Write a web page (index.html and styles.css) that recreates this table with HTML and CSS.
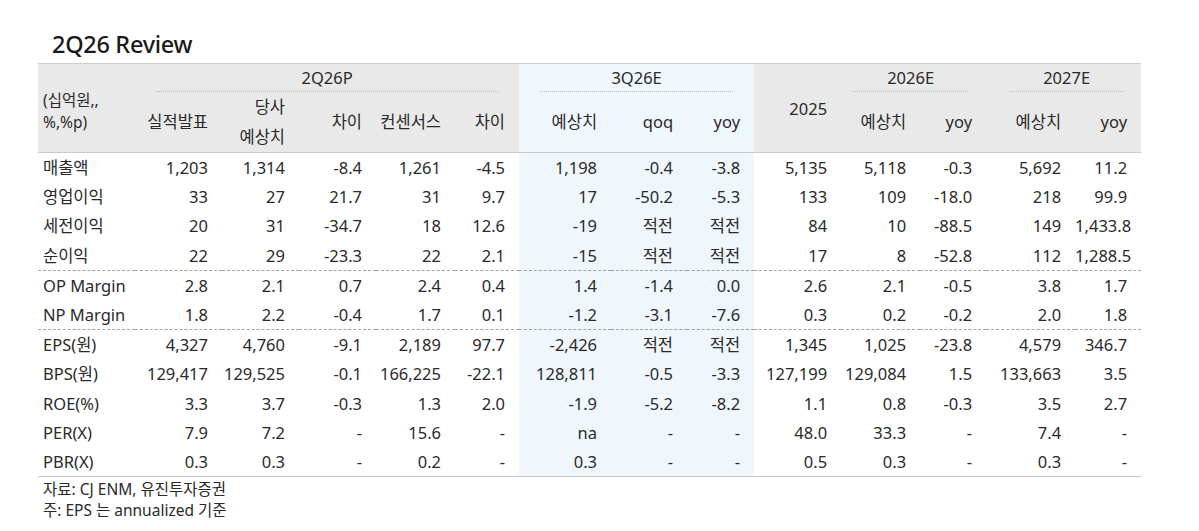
FILE: index.html
```html
<!DOCTYPE html>
<html lang="ko">
<head>
<meta charset="utf-8">
<title>2Q26 Review</title>
<link rel="stylesheet" href="styles.css">
</head>
<body>
<div class="page">
  <h1 class="title">2Q26 Review</h1>
  <table class="tbl">
    <colgroup>
      <col style="width:97px"><col style="width:87px"><col style="width:77px"><col style="width:77px"><col style="width:79px"><col style="width:64px">
      <col style="width:92px"><col style="width:76px"><col style="width:67px">
      <col style="width:87px"><col style="width:79px"><col style="width:66px"><col style="width:89px"><col style="width:66px">
    </colgroup>
    <thead>
      <tr class="hA">
        <th class="unit" rowspan="2">(십억원,,<br>%,%p)</th>
        <th class="grp g1" colspan="5"><div>2Q26P</div></th>
        <th class="grp g2 b" colspan="3"><div>3Q26E</div></th>
        <th class="yr" rowspan="2">2025</th>
        <th class="grp g3" colspan="2"><div>2026E</div></th>
        <th class="grp g4" colspan="2"><div>2027E</div></th>
      </tr>
      <tr class="hB">
        <th>실적발표</th>
        <th class="two">당사<br>예상치</th>
        <th>차이</th>
        <th>컨센서스</th>
        <th>차이</th>
        <th class="b">예상치</th>
        <th class="b">qoq</th>
        <th class="b">yoy</th>
        <th>예상치</th>
        <th>yoy</th>
        <th>예상치</th>
        <th>yoy</th>
      </tr>
    </thead>
    <tbody>
      <tr><td>매출액</td><td>1,203</td><td>1,314</td><td>-8.4</td><td>1,261</td><td>-4.5</td><td>1,198</td><td>-0.4</td><td>-3.8</td><td>5,135</td><td>5,118</td><td>-0.3</td><td>5,692</td><td>11.2</td></tr>
      <tr><td>영업이익</td><td>33</td><td>27</td><td>21.7</td><td>31</td><td>9.7</td><td>17</td><td>-50.2</td><td>-5.3</td><td>133</td><td>109</td><td>-18.0</td><td>218</td><td>99.9</td></tr>
      <tr><td>세전이익</td><td>20</td><td>31</td><td>-34.7</td><td>18</td><td>12.6</td><td>-19</td><td>적전</td><td>적전</td><td>84</td><td>10</td><td>-88.5</td><td>149</td><td>1,433.8</td></tr>
      <tr><td>순이익</td><td>22</td><td>29</td><td>-23.3</td><td>22</td><td>2.1</td><td>-15</td><td>적전</td><td>적전</td><td>17</td><td>8</td><td>-52.8</td><td>112</td><td>1,288.5</td></tr>
      <tr class="sep"><td>OP Margin</td><td>2.8</td><td>2.1</td><td>0.7</td><td>2.4</td><td>0.4</td><td>1.4</td><td>-1.4</td><td>0.0</td><td>2.6</td><td>2.1</td><td>-0.5</td><td>3.8</td><td>1.7</td></tr>
      <tr><td>NP Margin</td><td>1.8</td><td>2.2</td><td>-0.4</td><td>1.7</td><td>0.1</td><td>-1.2</td><td>-3.1</td><td>-7.6</td><td>0.3</td><td>0.2</td><td>-0.2</td><td>2.0</td><td>1.8</td></tr>
      <tr class="sep"><td>EPS(원)</td><td>4,327</td><td>4,760</td><td>-9.1</td><td>2,189</td><td>97.7</td><td>-2,426</td><td>적전</td><td>적전</td><td>1,345</td><td>1,025</td><td>-23.8</td><td>4,579</td><td>346.7</td></tr>
      <tr><td>BPS(원)</td><td>129,417</td><td>129,525</td><td>-0.1</td><td>166,225</td><td>-22.1</td><td>128,811</td><td>-0.5</td><td>-3.3</td><td>127,199</td><td>129,084</td><td>1.5</td><td>133,663</td><td>3.5</td></tr>
      <tr><td>ROE(%)</td><td>3.3</td><td>3.7</td><td>-0.3</td><td>1.3</td><td>2.0</td><td>-1.9</td><td>-5.2</td><td>-8.2</td><td>1.1</td><td>0.8</td><td>-0.3</td><td>3.5</td><td>2.7</td></tr>
      <tr><td>PER(X)</td><td>7.9</td><td>7.2</td><td>-</td><td>15.6</td><td>-</td><td>na</td><td>-</td><td>-</td><td>48.0</td><td>33.3</td><td>-</td><td>7.4</td><td>-</td></tr>
      <tr><td>PBR(X)</td><td>0.3</td><td>0.3</td><td>-</td><td>0.2</td><td>-</td><td>0.3</td><td>-</td><td>-</td><td>0.5</td><td>0.3</td><td>-</td><td>0.3</td><td>-</td></tr>
    </tbody>
  </table>
  <div class="notes">
    <p>자료: CJ ENM, 유진투자증권</p>
    <p>주: EPS 는 annualized 기준</p>
  </div>
</div>
</body>
</html>
```

FILE: styles.css
```css
html, body {
  margin: 0;
  padding: 0;
  background: #ffffff;
}

body {
  font-family: "Noto Sans", "Noto Sans CJK KR", sans-serif;
  color: #2a2a2a;
}

.page {
  padding: 29px 0 0 38px;
}

.title {
  margin: 0 0 4px 14px;
  font-size: 23.5px;
  font-weight: 500;
  line-height: 30px;
  color: #1a1a1a;
  letter-spacing: -0.3px;
}

.tbl {
  border-collapse: collapse;
  table-layout: fixed;
  width: 1103px;
  font-size: 16.5px;
  border-top: 1px solid #cdcdcd;
  border-bottom: 1px solid #c4c4c4;
}

.tbl th {
  font-weight: 400;
  background: #e9e9e9;
  text-align: right;
  padding: 0 14px 0 0;
  white-space: nowrap;
}

.tbl th.b {
  background: #eff7fd;
}

.tbl thead tr.hB th {
  height: 59px;
  vertical-align: middle;
  line-height: 22px;
  border-bottom: 1px solid #c9c9c9;
}

.tbl th.unit {
  text-align: left;
  padding: 6px 0 0 5px;
  font-size: 15.5px;
  line-height: 22.5px;
  vertical-align: middle;
  border-bottom: 1px solid #c9c9c9;
}

.tbl th.yr {
  vertical-align: middle;
  border-bottom: 1px solid #c9c9c9;
}

.tbl thead tr.hB th.two {
  line-height: 30px;
}

.tbl th.grp {
  text-align: center;
  vertical-align: top;
  height: 28px;
}

.tbl th.grp div {
  line-height: 27px;
  border-bottom: 1px dotted #bcbcbc;
}

.tbl th.g1 { padding: 0 21px; }
.tbl th.g2 { padding: 0 21px; }
.tbl th.g3 { padding: 0 18px 0 12px; }
.tbl th.g4 { padding: 0 18px 0 24px; }

.tbl td {
  text-align: right;
  padding: 0 14px 0 0;
  line-height: 29.2px;
  white-space: nowrap;
}

.tbl td:first-child {
  text-align: left;
  padding: 0 0 0 5px;
}

.tbl td:nth-child(7),
.tbl td:nth-child(8),
.tbl td:nth-child(9) {
  background: #eff7fd;
}

.tbl tr.sep td {
  border-top: 1px dashed #a3a3a3;
}

.notes {
  padding: 2px 0 0 5px;
  font-size: 15.5px;
  line-height: 21px;
  color: #2a2a2a;
}

.notes p {
  margin: 0;
}
```
